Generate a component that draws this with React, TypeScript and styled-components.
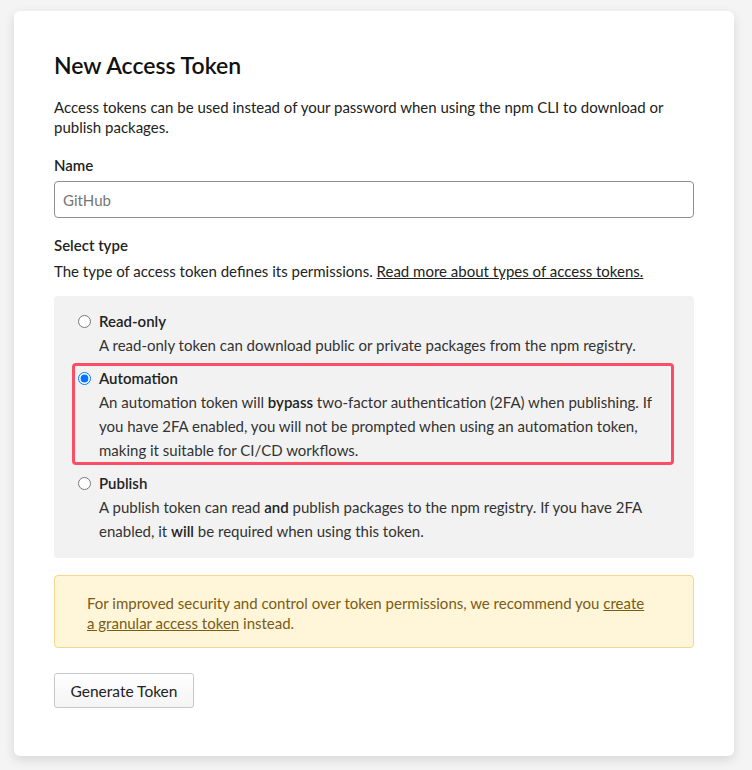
import styled, { createGlobalStyle } from "styled-components";

const GlobalStyle = createGlobalStyle`
    html, body {
        margin: 0;
        padding: 0;
        background: #f4f4f4;
    }
    body {
        font-family: "Source Sans Pro", Lato, "Noto Sans", sans-serif;
        color: #1f1f1f;
        font-size: 15px;
    }
`;

// --- Styled Components ---

const Page = styled.div`
    padding: 11px 18px 14px 14px;
`;

const Card = styled.div`
    background: #ffffff;
    border-radius: 6px;
    box-shadow: 0 4px 12px rgba(0, 0, 0, 0.12);
    padding: 39px 40px 48px 40px;
    display: flex;
    flex-direction: column;
`;

const Title = styled.h1`
    margin: 0;
    font-size: 23px;
    line-height: 30px;
    font-weight: 600;
    color: #111;
`;

const Text = styled.p<{ $top?: number }>`
    margin: ${({ $top }) => $top ?? 0}px 0 0 0;
    font-size: 15px;
    line-height: 20px;
    color: #222;
`;

const Label = styled.label<{ $top: number }>`
    display: block;
    margin-top: ${({ $top }) => $top}px;
    font-size: 15px;
    line-height: 20px;
    font-weight: 600;
    color: #222;
`;

const Input = styled.input`
    margin-top: 6px;
    height: 37px;
    box-sizing: border-box;
    width: 100%;
    border: 1px solid #8e8e8e;
    border-radius: 4px;
    padding: 0 8px;
    font: inherit;
    font-size: 15px;
    color: #767676;
    outline: none;
`;

const Link = styled.a`
    color: inherit;
    text-decoration: underline;
`;

const OptionList = styled.div`
    margin-top: 15px;
    background: #f2f2f2;
    border-radius: 4px;
    padding: 10px 20px 12px 18px;
    display: flex;
    flex-direction: column;
    gap: 3px;
`;

const Option = styled.label<{ $selected?: boolean }>`
    display: grid;
    grid-template-columns: 21px 1fr;
    border: 3px solid ${({ $selected }) => ($selected ? "#fb4e66" : "transparent")};
    border-radius: 4px;
    padding: 0 0 0 3px;
    font-size: 15px;
    line-height: 24px;
    color: #333;
    cursor: pointer;
`;

const Radio = styled.input`
    margin: 6px 0 0 0;
    width: 13px;
    height: 13px;
    accent-color: #0075ff;
`;

const OptionTitle = styled.span`
    font-weight: 600;
    color: #222;
`;

const OptionDesc = styled.span`
    grid-column: 2;

    b {
        font-weight: 600;
        color: #222;
    }
`;

const Notice = styled.div`
    margin-top: 17px;
    background: #fff5d8;
    border: 1px solid #f4d78b;
    border-radius: 4px;
    padding: 17px 40px 14px 32px;
    font-size: 15px;
    line-height: 20px;
    color: #7a5c14;
`;

const Button = styled.button`
    margin-top: 25px;
    align-self: flex-start;
    width: 140px;
    height: 35px;
    border: 1px solid #c8c8c8;
    border-radius: 3px;
    background: linear-gradient(#ffffff, #f4f4f4);
    font: inherit;
    font-size: 15.5px;
    color: #222;
    cursor: pointer;
`;

// --- Component ---

export default function App() {
    return (
        <Page>
            <GlobalStyle />
            <Card>
                <Title>New Access Token</Title>
                <Text $top={17}>
                    Access tokens can be used instead of your password when using the npm CLI to download or
                    publish packages.
                </Text>

                <Label $top={18} htmlFor="token-name">Name</Label>
                <Input id="token-name" defaultValue="GitHub" />

                <Label $top={17}>Select type</Label>
                <Text $top={6}>
                    The type of access token defines its permissions.{" "}
                    <Link href="#">Read more about types of access tokens.</Link>
                </Text>

                <OptionList>
                    <Option>
                        <Radio type="radio" name="type" />
                        <OptionTitle>Read-only</OptionTitle>
                        <OptionDesc>
                            A read-only token can download public or private packages from the npm registry.
                        </OptionDesc>
                    </Option>
                    <Option $selected>
                        <Radio type="radio" name="type" defaultChecked />
                        <OptionTitle>Automation</OptionTitle>
                        <OptionDesc>
                            An automation token will <b>bypass</b> two-factor authentication (2FA) when
                            publishing. If you have 2FA enabled, you will not be prompted when using an
                            automation token, making it suitable for CI/CD workflows.
                        </OptionDesc>
                    </Option>
                    <Option>
                        <Radio type="radio" name="type" />
                        <OptionTitle>Publish</OptionTitle>
                        <OptionDesc>
                            A publish token can read <b>and</b> publish packages to the npm registry. If you
                            have 2FA enabled, it <b>will</b> be required when using this token.
                        </OptionDesc>
                    </Option>
                </OptionList>

                <Notice>
                    For improved security and control over token permissions, we recommend you{" "}
                    <Link href="#">create a granular access token</Link> instead.
                </Notice>

                <Button type="button">Generate Token</Button>
            </Card>
        </Page>
    );
}
